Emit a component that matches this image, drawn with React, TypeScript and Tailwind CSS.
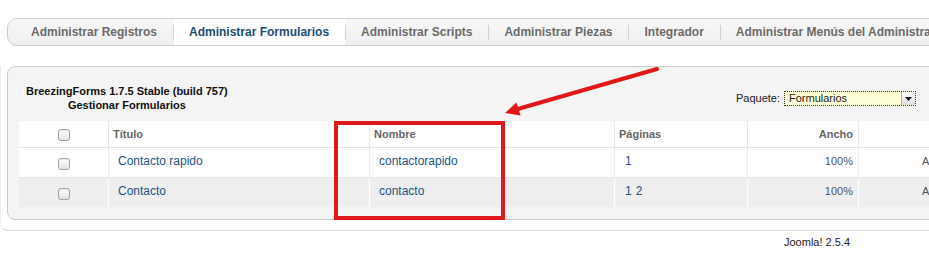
import React from 'react';

const tabs = [
  'Administrar Registros',
  'Administrar Formularios',
  'Administrar Scripts',
  'Administrar Piezas',
  'Integrador',
  'Administrar Menús del Administrador',
];

const rows = [
  { titulo: 'Contacto rapido', nombre: 'contactorapido', paginas: ['1'], ancho: '100%' },
  { titulo: 'Contacto', nombre: 'contacto', paginas: ['1', '2'], ancho: '100%' },
];

function Checkbox() {
  return (
    <span className="inline-block h-[12px] w-[12px] rounded-[3px] border border-[#a3a3a3] bg-linear-to-b from-white to-[#e4e4e4] shadow-[inset_0_1px_1px_rgba(0,0,0,0.08)]" />
  );
}

function App() {
  return (
    <div className="relative h-[257px] w-[929px] overflow-hidden bg-white font-['Liberation_Sans',Arial,sans-serif]">
      {/* submenu tabs */}
      <div className="pl-[7px] pt-[18px]">
        <div className="flex h-[28px] w-[1100px] items-stretch rounded-l-[10px] border border-[#cfcfcf] bg-linear-to-b from-[#f7f7f7] to-[#efefef] pl-[8px]">
          {tabs.map((t, i) => (
            <React.Fragment key={t}>
              {i > 0 && <div className="h-[15px] w-px self-center bg-[#d2d2d2]" />}
              <div
                className={
                  i === 1
                    ? 'flex items-center whitespace-nowrap bg-white pl-[15px] pr-[16px] text-[12px] font-bold text-[#1d4d75]'
                    : 'flex items-center whitespace-nowrap pl-[15px] pr-[16px] text-[12px] font-bold text-[#6b6b6b]'
                }
              >
                {t}
              </div>
            </React.Fragment>
          ))}
        </div>
      </div>

      {/* content */}
      <div className="mt-[20px] w-[1100px] rounded-bl-[8px] border-b border-l border-[#d8d8d8] border-l-[#f0f0f0] pb-[10px] pl-[6px]">
        <div className="rounded-[8px] border border-[#cccccc] bg-[#f4f4f4] pb-[12px] pl-[11px] pt-[17px]">
          <div className="mb-[9px] ml-[7px] flex h-[28px] w-[890px] items-center justify-between">
            <div className="text-center text-[11px] font-bold leading-[14px] text-[#111]">
              <div>BreezingForms 1.7.5 Stable (build 757)</div>
              <div>Gestionar Formularios</div>
            </div>
            <div className="flex items-center gap-[4px] pt-[1px] text-[11px] text-[#222]">
              <span>Paquete:</span>
              <div className="flex h-[15px] w-[132px] items-center border border-dotted border-[#333] bg-[#ffffd8]">
                <span className="flex-1 pl-[4px] leading-[13px]">Formularios</span>
                <span className="flex h-[13px] w-[14px] items-center justify-center border-l border-[#b0b0b0] bg-linear-to-b from-white to-[#dcdcdc]">
                  <svg width="7" height="4" viewBox="0 0 7 4">
                    <path d="M0 0h7L3.5 4z" fill="#111" />
                  </svg>
                </span>
              </div>
            </div>
          </div>

          <div className="w-[1100px] text-[12px]">
            {/* header */}
            <div className="flex h-[27px] border-b border-[#e4e4e4] bg-white text-[11px] font-bold text-[#666666]">
              <div className="flex w-[89px] items-center justify-center pt-[2px]">
                <Checkbox />
              </div>
              <div className="w-[261px] border-l border-[#e8e8e8] pl-[4px] pt-[5px]">Título</div>
              <div className="w-[245px] border-l border-[#e8e8e8] pl-[4px] pt-[5px]">Nombre</div>
              <div className="w-[133px] border-l border-[#e8e8e8] pl-[4px] pt-[5px]">Páginas</div>
              <div className="w-[111px] border-l border-[#e8e8e8] pr-[5px] pt-[5px] text-right">Ancho</div>
              <div className="w-[200px] border-l border-[#e8e8e8]" />
            </div>
            {rows.map((r, i) => (
              <div
                key={r.nombre}
                className={
                  i === 0
                    ? 'flex h-[30px] border-b border-[#e6e6e6] bg-white'
                    : 'flex h-[29px] bg-[#eeeeee]'
                }
              >
                <div className="flex w-[89px] items-center justify-center pt-[2px]">
                  <Checkbox />
                </div>
                <div className={i === 0 ? 'w-[261px] border-l border-[#ececec] pl-[9px] pt-[4px]' : 'w-[261px] border-l border-white pl-[9px] pt-[4px]'}>
                  <span className="text-[#215583]">{r.titulo}</span>
                </div>
                <div className={i === 0 ? 'w-[245px] border-l border-[#ececec] pl-[9px] pt-[4px]' : 'w-[245px] border-l border-white pl-[9px] pt-[4px]'}>
                  <span className="text-[#215583]">{r.nombre}</span>
                </div>
                <div className={i === 0 ? 'flex w-[133px] gap-[4px] border-l border-[#ececec] pl-[10px] pt-[4px]' : 'flex w-[133px] gap-[4px] border-l border-white pl-[10px] pt-[4px]'}>
                  {r.paginas.map((p) => (
                    <span key={p} className="text-[#215583]">{p}</span>
                  ))}
                </div>
                <div className={i === 0 ? 'w-[111px] border-l border-[#ececec] pr-[5px] pt-[5px] text-right text-[11px] text-[#555555]' : 'w-[111px] border-l border-white pr-[5px] pt-[5px] text-right text-[11px] text-[#555555]'}>
                  {r.ancho}
                </div>
                <div className={i === 0 ? 'w-[200px] border-l border-[#ececec] pl-[63px] pt-[5px] text-[11px] text-[#555555]' : 'w-[200px] border-l border-white pl-[63px] pt-[5px] text-[11px] text-[#555555]'}>
                  Activo
                </div>
              </div>
            ))}
          </div>
        </div>
      </div>

      <div className="pl-[784px] pt-[4px] text-[11px] leading-[14px] text-[#222]">Joomla! 2.5.4</div>

      {/* annotation overlays */}
      <div className="absolute left-[334px] top-[121px] h-[99px] w-[171px] border-4 border-[#dc1a1a]" />
      <svg className="pointer-events-none absolute left-0 top-0" width="929" height="257">
        <line x1="657" y1="69" x2="516" y2="109.5" stroke="#e01818" strokeWidth="4" strokeLinecap="round" />
        <polygon points="505,113 520.5,115.5 516.5,102.5" fill="#e01818" />
      </svg>
    </div>
  );
}

export default App;
